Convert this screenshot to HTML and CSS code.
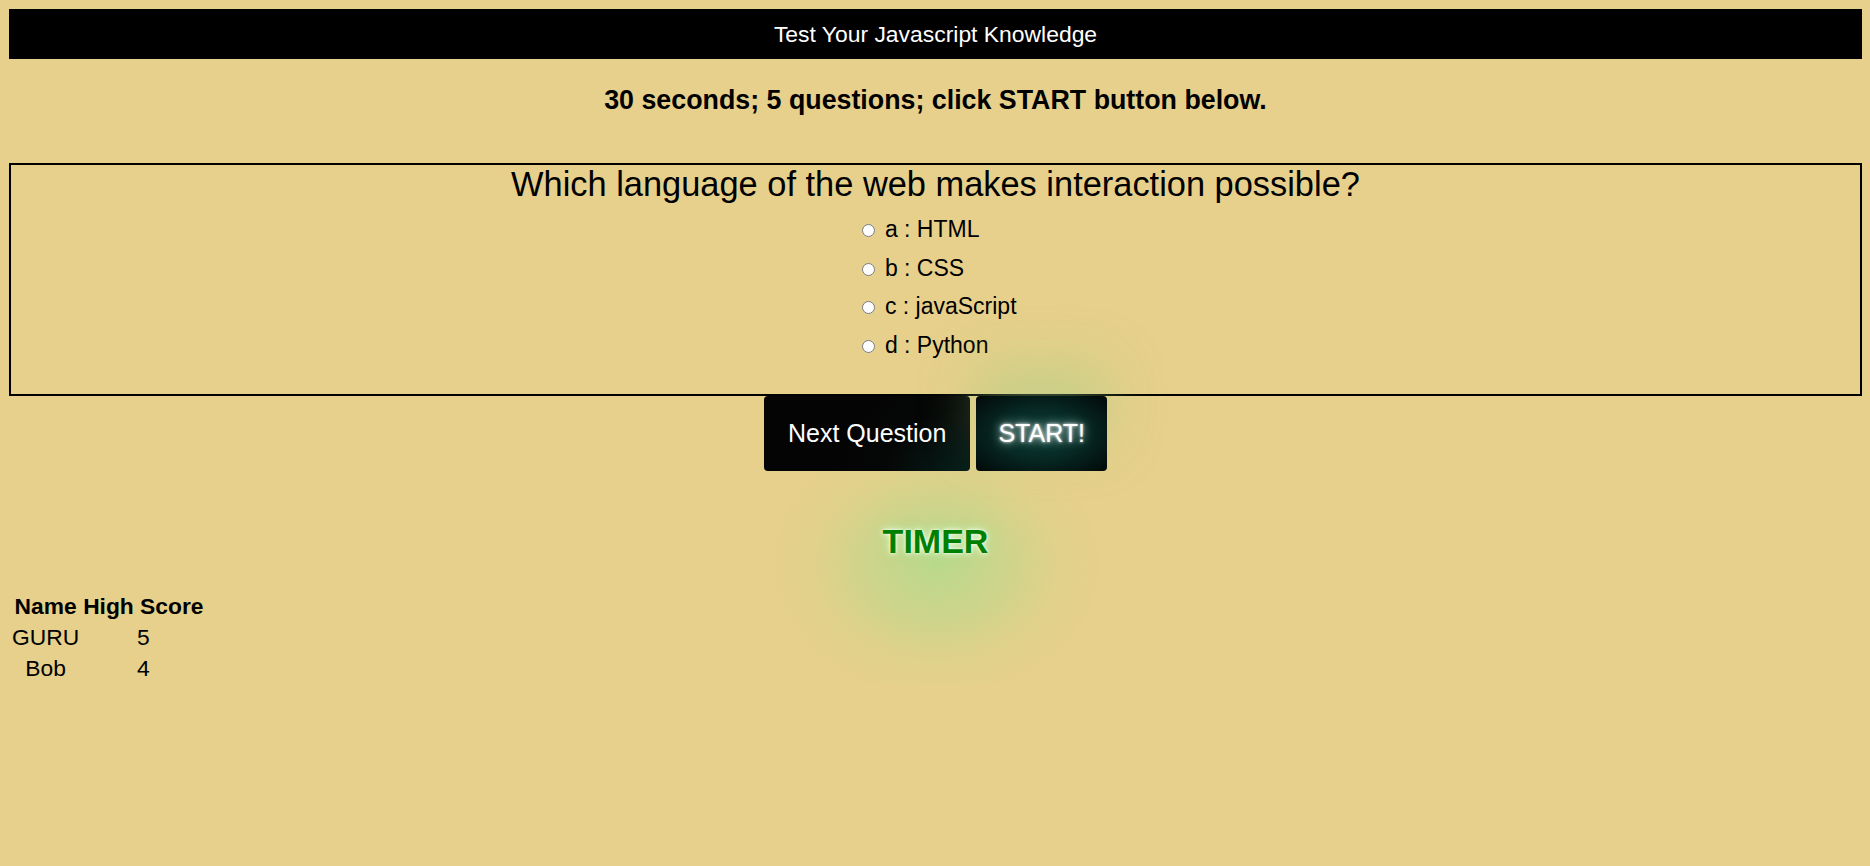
FILE: index.html
```html
<!DOCTYPE html>
<html lang="en">
<head>
<meta charset="utf-8">
<title>Javascript Quiz</title>
<link rel="stylesheet" href="styles.css">
</head>
<body>
<header class="topbar">Test Your Javascript Knowledge</header>
<h3 class="intro">30 seconds; 5 questions; click START button below.</h3>
<section class="quiz">
  <h2 class="question">Which language of the web makes interaction possible?</h2>
  <div class="options">
    <label class="option"><input type="radio" name="answer" value="a"> a : HTML</label>
    <label class="option"><input type="radio" name="answer" value="b"> b : CSS</label>
    <label class="option"><input type="radio" name="answer" value="c"> c : javaScript</label>
    <label class="option"><input type="radio" name="answer" value="d"> d : Python</label>
  </div>
</section>
<div class="controls">
  <button class="btn btn-next" type="button">Next Question</button>
  <button class="btn btn-start" type="button">START!</button>
</div>
<h2 class="timer">TIMER</h2>
<table class="scores">
  <thead>
    <tr><th>Name</th><th>High Score</th></tr>
  </thead>
  <tbody>
    <tr><td>GURU</td><td>5</td></tr>
    <tr><td>Bob</td><td>4</td></tr>
  </tbody>
</table>
</body>
</html>
```

FILE: styles.css
```css
html {
  background: #e6d08b;
}

body {
  margin: 9px 8px 8px 9px;
  font-family: "Liberation Sans", Arial, sans-serif;
  font-size: 22.8px;
  color: #000;
}

.topbar {
  display: block;
  background: #000;
  color: #fff;
  text-align: center;
  padding: 12px;
  line-height: 26px;
  font-size: 22.9px;
}

.intro {
  font-size: 26.8px;
  font-weight: bold;
  text-align: center;
  margin: 26px 0 48px;
  line-height: 30px;
}

.quiz {
  border: 2px solid #000;
  padding: 0 0 36.5px;
  text-align: center;
}

.question {
  font-size: 34.4px;
  font-weight: normal;
  line-height: 39px;
  margin: 0;
}

.options {
  width: 158px;
  margin: 12px auto 0;
  display: flex;
  flex-direction: column;
  gap: 12.5px;
  text-align: left;
}

.option {
  display: block;
  font-size: 23px;
  line-height: 26px;
  height: 26px;
  white-space: nowrap;
}

.option input {
  margin: 3px 4px 0 5px;
}

.controls {
  display: flex;
  justify-content: center;
  gap: 6px;
}

.btn {
  font-family: "Liberation Sans", Arial, sans-serif;
  font-size: 25px;
  line-height: 29px;
  color: #fff;
  border: none;
  border-radius: 4px;
  cursor: pointer;
}

.btn-next {
  padding: 23px 24px;
  background: radial-gradient(circle at 95% 120%, #06201c 0%, #050706 35%, #040404 60%);
}

.btn-start {
  padding: 23px 22px;
  background: radial-gradient(ellipse at 50% 50%, #0c3c36 0%, #072a25 45%, #031210 85%, #020806 100%);
  text-shadow: 0 0 3px #fff, 0 0 8px rgba(255, 255, 255, 0.75), 0 0 14px rgba(200, 255, 240, 0.45);
  box-shadow: 0 -30px 55px rgba(150, 205, 130, 0.4);
}

.timer {
  position: relative;
  font-size: 34px;
  font-weight: bold;
  line-height: 39px;
  color: #008000;
  text-align: center;
  margin: 51px 0 29px;
  text-shadow: 0 0 3px #fff, 0 0 7px #e8ffe0, 0 0 16px rgba(170, 235, 150, 0.9);
}

.timer::before {
  content: "";
  position: absolute;
  left: 50%;
  top: 50%;
  width: 330px;
  height: 270px;
  transform: translate(-50%, -42%);
  background: radial-gradient(closest-side, rgba(150, 225, 140, 0.55) 0%, rgba(160, 220, 140, 0.36) 40%, rgba(185, 215, 140, 0.14) 72%, rgba(230, 208, 139, 0) 100%);
  z-index: -1;
}

.scores {
  border-spacing: 2px;
  font-size: 22.8px;
}

.scores th,
.scores td {
  padding: 1px;
  line-height: 27px;
  text-align: center;
}

.scores th {
  font-weight: bold;
}
```
